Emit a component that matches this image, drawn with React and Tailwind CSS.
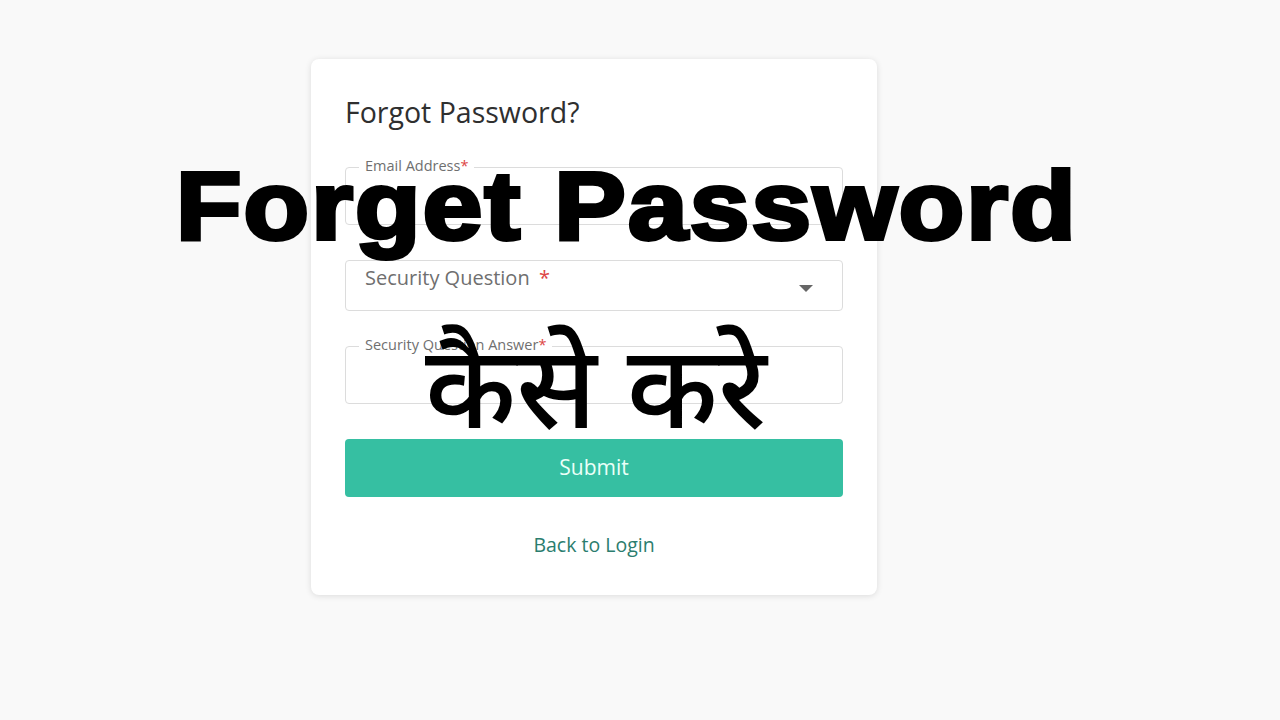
import React from "react";

const ui = { fontFamily: "'Open Sans', Roboto, sans-serif" };

const OutlinedField = ({ label }) => (
    <div className="relative">
        <div className="h-[58px] rounded border border-[#dcdcdc] bg-white" />
        <span className="absolute left-[14px] top-[-11px] bg-white px-[6px] text-[14.5px] text-[#6f6f6f] leading-5">
            {label}
            <span className="text-[#d44]">*</span>
        </span>
    </div>
);

export default function App() {
    return (
        <div className="relative min-h-[720px] w-full overflow-hidden bg-[#f9f9f9]" style={ui}>
            <div className="pt-[59px] pl-[311px]">
                <div className="w-[566px] rounded-lg bg-white px-[34px] pt-[35px] pb-[36px] shadow-[0_1px_6px_rgba(0,0,0,0.12)]">
                    <h1 className="text-[28.5px] leading-9 text-[#2f2f2f]">Forgot Password?</h1>

                    <div className="mt-[37px] flex flex-col">
                        <OutlinedField label="Email Address" />

                        <div className="mt-[35px] flex h-[51px] items-start justify-between rounded border border-[#dcdcdc] pl-[19px] pr-[28px] pt-[2px]">
                            <span className="text-[20px] text-[#6f6f6f]">
                                Security Question <span className="ml-1 text-[#d44]">*</span>
                            </span>
                            <svg width="16" height="10" viewBox="0 0 16 10" className="mt-[20px]">
                                <path d="M1 2 L15 2 L8 9 Z" fill="#666" />
                            </svg>
                        </div>

                        <div className="mt-[35px]">
                            <OutlinedField label="Security Question Answer" />
                        </div>

                        <button className="mt-[35px] h-[58px] w-full rounded bg-[#36bfa2] text-[21px] text-[#eafff8]">
                            Submit
                        </button>

                        <a className="mt-[33px] text-center text-[19.5px] text-[#2b7d6e]">Back to Login</a>
                    </div>
                </div>
            </div>

            <div
                className="absolute left-[176px] top-[158px] origin-left scale-x-[1.115] whitespace-nowrap text-[96px] font-bold leading-none tracking-[2px] text-black [-webkit-text-stroke:4px_black]"
                style={{ fontFamily: "'Liberation Sans', Arial, sans-serif" }}
            >
                Forget Password
            </div>
            <div
                className="absolute left-[425px] top-[342px] whitespace-nowrap text-[116px] font-medium leading-none text-black"
                style={{ fontFamily: "'Noto Sans Devanagari', 'Noto Sans', sans-serif" }}
            >
                कैसे करे
            </div>
        </div>
    );
}
